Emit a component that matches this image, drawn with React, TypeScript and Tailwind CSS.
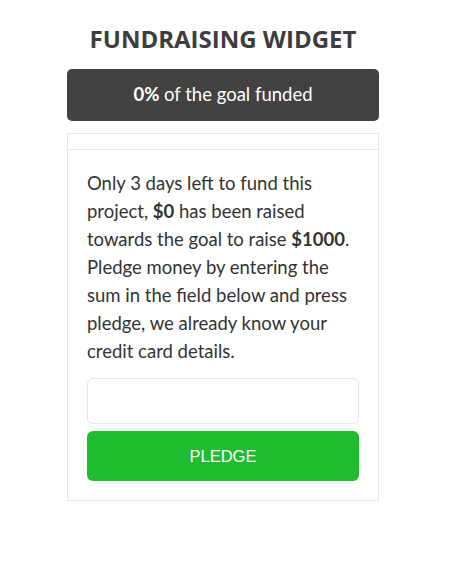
export default function App() {
  return (
    <div className="w-[458px] h-[565px] bg-white">
      <div className="ml-[67px] w-[312px] pt-[26px]">
        <h1 className="text-center font-bold text-[24px] leading-[25px] text-[#3d3d3d]" style={{ fontFamily: '"Open Sans", sans-serif' }}>
          FUNDRAISING WIDGET
        </h1>
        <div className="mt-[18px] h-[52px] rounded-[5px] bg-[#424242] flex items-center justify-center text-white text-[18.5px]" style={{ fontFamily: 'Lato, sans-serif' }}>
          <span><b>0%</b> of the goal funded</span>
        </div>
        <div className="mt-[12px] border border-[#e8e8e8]">
          <div className="h-[16px] border-b border-[#e8e8e8]" />
          <div className="px-[19px] pt-[19px] pb-[19px]">
            <p className="text-[18.5px] leading-[28px] text-[#333] whitespace-nowrap" style={{ fontFamily: 'Lato, sans-serif' }}>
              Only 3 days left to fund this<br />
              project, <b>$0</b> has been raised<br />
              towards the goal to raise <b>$1000</b>.<br />
              Pledge money by entering the<br />
              sum in the field below and press<br />
              pledge, we already know your<br />
              credit card details.
            </p>
            <input className="mt-[13px] block w-full h-[46px] rounded-[6px] border border-[#e6e6e6] bg-white outline-none" />
            <button className="mt-[7px] block w-full h-[50px] rounded-[6px] bg-[#1fbc2f] text-white text-[16.5px]" style={{ fontFamily: '"Liberation Sans", Arial, sans-serif' }}>
              PLEDGE
            </button>
          </div>
        </div>
      </div>
    </div>
  );
}
